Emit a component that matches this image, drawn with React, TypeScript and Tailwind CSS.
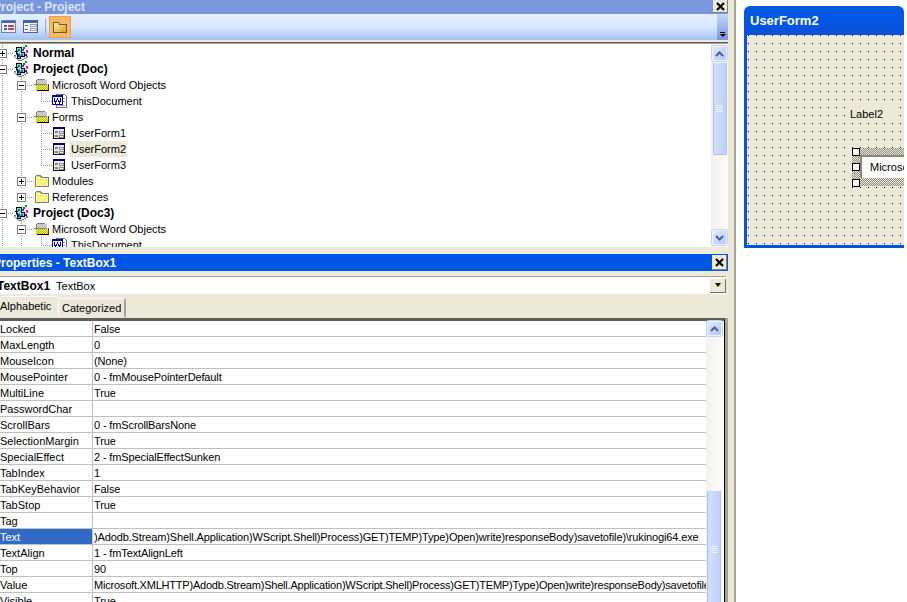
const PROPS: [string, string][] = [
  ["Locked", "False"],
  ["MaxLength", "0"],
  ["MouseIcon", "(None)"],
  ["MousePointer", "0 - fmMousePointerDefault"],
  ["MultiLine", "True"],
  ["PasswordChar", ""],
  ["ScrollBars", "0 - fmScrollBarsNone"],
  ["SelectionMargin", "True"],
  ["SpecialEffect", "2 - fmSpecialEffectSunken"],
  ["TabIndex", "1"],
  ["TabKeyBehavior", "False"],
  ["TabStop", "True"],
  ["Tag", ""],
  ["Text", ")Adodb.Stream)Shell.Application)WScript.Shell)Process)GET)TEMP)Type)Open)write)responseBody)savetofile)\\rukinogi64.exe"],
  ["TextAlign", "1 - fmTextAlignLeft"],
  ["Top", "90"],
  ["Value", "Microsoft.XMLHTTP)Adodb.Stream)Shell.Application)WScript.Shell)Process)GET)TEMP)Type)Open)write)responseBody)savetofile)\\rukinogi64.exe"],
  ["Visible", "True"],
];

type Kind = "project" | "open" | "closed" | "doc" | "form";

interface TreeRow {
  label: string;
  level: number;
  kind: Kind;
  box?: "+" | "-";
  guides: number[];
  elbow?: "mid" | "end";
  bold?: boolean;
  selected?: boolean;
}

const TREE: TreeRow[] = [
  { label: "Normal", level: 0, kind: "project", box: "+", guides: [2], bold: true },
  { label: "Project (Doc)", level: 0, kind: "project", box: "-", guides: [2], bold: true },
  { label: "Microsoft Word Objects", level: 1, kind: "open", box: "-", guides: [2, 21] },
  { label: "ThisDocument", level: 2, kind: "doc", guides: [2, 21], elbow: "end" },
  { label: "Forms", level: 1, kind: "open", box: "-", guides: [2, 21] },
  { label: "UserForm1", level: 2, kind: "form", guides: [2, 21, 41], elbow: "mid" },
  { label: "UserForm2", level: 2, kind: "form", guides: [2, 21, 41], elbow: "mid", selected: true },
  { label: "UserForm3", level: 2, kind: "form", guides: [2, 21], elbow: "end" },
  { label: "Modules", level: 1, kind: "closed", box: "+", guides: [2, 21] },
  { label: "References", level: 1, kind: "closed", box: "+", guides: [2] },
  { label: "Project (Doc3)", level: 0, kind: "project", box: "-", guides: [2], bold: true },
  { label: "Microsoft Word Objects", level: 1, kind: "open", box: "-", guides: [2, 21] },
  { label: "ThisDocument", level: 2, kind: "doc", guides: [2, 21], elbow: "end" },
];

function Dither({ x, y, w, h, alt }: { x: number; y: number; w: number; h: number; alt: string }) {
  const cells = [];
  for (let j = 0; j < h; j++) {
    for (let i = 0; i < w; i++) {
      cells.push(<rect key={`${i}-${j}`} x={x + i} y={y + j} width="1" height="1" fill={(i + j) % 2 ? "#ffff00" : alt} />);
    }
  }
  return <>{cells}</>;
}

function NodeIcon({ kind, x }: { kind: Kind; x: number }) {
  if (kind === "project") {
    return (
      <g transform={`translate(${x},0)`}>
        {/* base plate */}
        <path d="M1 11l7-3 7 4-6 3H5z" fill="#e8e8e8" stroke="#808080" />
        {/* stacked blocks */}
        <path d="M3.5 2.5h5v5h3v4h-4v2h-3v-5h-1z" fill="#70e0e0" stroke="#000" />
        <rect x="5" y="4" width="2" height="2" fill="#008080" />
        <rect x="8" y="9" width="2" height="2" fill="#008080" />
        <rect x="5" y="9" width="2" height="3" fill="#0040c0" />
        <rect x="2" y="6" width="3" height="1" fill="#000" />
        {/* coloured tips */}
        <rect x="12" y="0" width="2" height="2" fill="#00b000" />
        <rect x="10" y="2" width="2" height="2" fill="#008000" />
        <rect x="9" y="4" width="2" height="2" fill="#c000c0" />
        <rect x="13" y="5" width="2" height="3" fill="#ff00ff" />
        <rect x="12" y="9" width="2" height="2" fill="#800080" />
      </g>
    );
  }
  if (kind === "open") {
    return (
      <g transform={`translate(${x},0)`}>
        <rect x="3" y="2" width="8" height="1" fill="#808080" />
        <rect x="2" y="3" width="11" height="4" fill="#c8c8bc" />
        <rect x="2" y="3" width="1" height="5" fill="#808080" />
        <rect x="0" y="7" width="13" height="1" fill="#808080" />
        <Dither x={2} y={8} w={12} h={5} alt="#a8a870" />
        <rect x="14" y="7" width="1" height="6" fill="#404040" />
        <rect x="3" y="13" width="12" height="1" fill="#000" />
      </g>
    );
  }
  if (kind === "closed") {
    return (
      <g transform={`translate(${x},0)`}>
        <rect x="2" y="2" width="5" height="2" fill="#d0d0c0" />
        <Dither x={2} y={4} w={12} h={9} alt="#ffffff" />
        <path d="M1.5 4v9.5h13v-9.5h-7l-2-2h-3l-1 2" fill="none" stroke="#808080" strokeWidth="1" />
      </g>
    );
  }
  if (kind === "doc") {
    return (
      <g transform={`translate(${x},0)`}>
        <path d="M4.5 1.5h8l2 2v11h-10z" fill="#fff" stroke="#707070" strokeWidth="1" />
        <rect x="11" y="5" width="2" height="1" fill="#a0a0a0" />
        <rect x="11" y="8" width="2" height="1" fill="#a0a0a0" />
        <rect x="6" y="12" width="7" height="1" fill="#a0a0a0" />
        <rect x="0.5" y="2.5" width="10" height="9" fill="#f0f4ff" stroke="#0000b0" strokeWidth="1" />
        <rect x="0" y="2" width="11" height="2" fill="#0000b0" />
        <path d="M2 5l1.5 5 2-4 2 4L9 5" fill="none" stroke="#0000b0" strokeWidth="1.2" />
      </g>
    );
  }
  return (
    <g transform={`translate(${x},0)`}>
      <rect x="1.5" y="2.5" width="11" height="11" fill="#e8e8e8" stroke="#101010" strokeWidth="1" />
      <rect x="1" y="2" width="12" height="2" fill="#000080" />
      <rect x="3" y="6" width="3" height="2" fill="#808080" />
      <rect x="7" y="6" width="4" height="2" fill="#fff" stroke="#404040" strokeWidth="0.6" />
      <rect x="3" y="10" width="3" height="2" fill="#808080" />
      <rect x="7" y="10" width="4" height="2" fill="#fff" stroke="#404040" strokeWidth="0.6" />
    </g>
  );
}

function Gutter({ row }: { row: TreeRow }) {
  const width = [32, 51, 70][row.level];
  const boxX = [2, 21][row.level] ?? 0;
  const iconX = [13, 34, 52][row.level];
  const dots = "#9a9a9a";
  return (
    <svg width={width} height="16" shapeRendering="crispEdges" className="shrink-0 overflow-visible">
      {row.guides.map((g) => (
        <line key={g} x1={g + 0.5} y1="0" x2={g + 0.5} y2="16" stroke={dots} strokeDasharray="1 1" />
      ))}
      {row.elbow && (
        <>
          <line x1="41.5" y1="0" x2="41.5" y2="8" stroke={dots} strokeDasharray="1 1" />
          <line x1="41" y1="8.5" x2="52" y2="8.5" stroke={dots} strokeDasharray="1 1" />
        </>
      )}
      {row.box && (
        <>
          <line x1={boxX + 4} y1="8.5" x2={iconX} y2="8.5" stroke={dots} strokeDasharray="1 1" />
          <rect x={boxX - 4 + 0.5} y="4.5" width="8" height="8" fill="#fff" stroke="#808080" />
          <rect x={boxX - 2} y="8" width="5" height="1" fill="#000" />
          {row.box === "+" && <rect x={boxX} y="6" width="1" height="5" fill="#000" />}
        </>
      )}
      <NodeIcon kind={row.kind} x={iconX} />
    </svg>
  );
}

function ArrowButton({ dir }: { dir: "up" | "down" }) {
  return (
    <div className="h-[15px] w-[15px] shrink-0 rounded-[2px] border border-[#eef2fd] bg-gradient-to-br from-[#e1eafe] to-[#aec8f7] flex items-center justify-center shadow-[0_0_0_1px_#c4d3f3]">
      <svg width="9" height="6" viewBox="0 0 9 6">
        <path d={dir === "up" ? "M1 5l3.5-3.5L8 5" : "M1 1l3.5 3.5L8 1"} fill="none" stroke="#4d6185" strokeWidth="2" />
      </svg>
    </div>
  );
}

function Thumb({ className }: { className: string }) {
  return (
    <div className={`${className} w-[14px] rounded-[2px] border border-[#a9bfec] border-t-[#eef3fe] bg-gradient-to-r from-[#d3e0fc] to-[#bdd0fa] flex items-center justify-center`}>
      <svg width="7" height="8" shapeRendering="crispEdges">
        {[0, 2, 4, 6].map((y) => (
          <rect key={y} x="0" y={y} width="7" height="1" fill="#eef3fe" />
        ))}
      </svg>
    </div>
  );
}

function CloseBox({ className }: { className: string }) {
  return (
    <div className={`${className} border-r border-b border-[#808080] bg-[#ece9d8] flex items-center justify-center`}>
      <svg width="9" height="9" viewBox="0 0 9 9">
        <path d="M1 1l7 7M8 1L1 8" stroke="#000" strokeWidth="2.2" />
      </svg>
    </div>
  );
}

export default function App() {
  return (
    <div className="flex h-[602px] w-[907px] overflow-hidden bg-white font-['Liberation_Sans',sans-serif] text-[11px] leading-4 text-black">
      {/* Left dock */}
      <div className="flex h-full w-[736px] shrink-0 flex-col border-r-2 border-[#a5a294] bg-[#ece9d8]">
        {/* Project explorer */}
        <div className="flex h-[14px] w-[728px] shrink-0 items-center overflow-hidden bg-[#7a96df]">
          <span className="-ml-[7px] flex-1 font-bold text-[12px] text-[#dce6f8]">Project - Project</span>
          <CloseBox className="h-[13px] w-[15px] self-start" />
        </div>
        <div className="flex h-[26px] w-[728px] shrink-0 items-center bg-gradient-to-b from-[#e3effe] via-[#d9e7fd] to-[#a3c1f5]">
          <div className="flex flex-1 items-center">
            <svg width="16" height="14" className="ml-[1px]" shapeRendering="crispEdges">
              <rect x="0.5" y="0.5" width="14" height="12" fill="#f4f6fb" stroke="#6b84b5" />
              <rect x="1" y="1" width="13" height="2" fill="#3a66c0" />
              <rect x="3" y="5" width="3" height="2" fill="#3a66c0" />
              <rect x="7" y="5" width="6" height="2" fill="#d04040" />
              <rect x="3" y="8" width="3" height="2" fill="#3a66c0" />
              <rect x="7" y="8" width="6" height="2" fill="#d04040" />
            </svg>
            <svg width="16" height="14" className="ml-[6px]" shapeRendering="crispEdges">
              <rect x="0.5" y="0.5" width="14" height="12" fill="#f4f6fb" stroke="#50628a" />
              <rect x="1" y="1" width="13" height="2" fill="#3a66c0" />
              <rect x="2" y="5" width="3" height="1" fill="#50628a" />
              <rect x="7" y="4.5" width="6" height="2" fill="#fff" stroke="#50628a" strokeWidth="0.6" />
              <rect x="2" y="9" width="3" height="1" fill="#50628a" />
              <rect x="7" y="8.5" width="6" height="2" fill="#fff" stroke="#50628a" strokeWidth="0.6" />
            </svg>
            <div className="ml-[6px] h-[16px] w-px bg-[#8faadc]" />
            <div className="ml-[3px] flex h-[22px] w-[22px] items-center justify-center bg-[#f9b866] shadow-[inset_0_0_0_1px_#f0a040]">
              <svg width="16" height="14" shapeRendering="crispEdges">
                <defs>
                  <linearGradient id="fold" x1="0" y1="0" x2="1" y2="1">
                    <stop offset="0" stopColor="#fff6c0" />
                    <stop offset="1" stopColor="#d89a10" />
                  </linearGradient>
                </defs>
                <path d="M1.5 2.5h5l1 1.5h7v8.5h-13z" fill="url(#fold)" stroke="#6a5a30" />
              </svg>
            </div>
          </div>
          <div className="flex h-full w-[11px] flex-col items-center justify-end bg-gradient-to-b from-[#c4d6f8] to-[#7a96df] pb-[3px]">
            <div className="mb-px h-px w-[5px] bg-black" />
            <div className="h-0 w-0 border-x-[3px] border-t-[3px] border-x-transparent border-t-black" />
          </div>
        </div>
        <div className="mt-[2px] h-[2px] w-[728px] shrink-0 border-t border-[#5f5e58] bg-[#a5a294]" />
        <div className="flex h-[203px] w-[728px] shrink-0 overflow-hidden bg-white">
          <div className="flex-1 overflow-hidden pt-px">
            {TREE.map((row, i) => (
              <div key={i} className="flex h-4 items-center">
                <Gutter row={row} />
                <span className={`px-[1px] ${row.bold ? "font-bold text-[12px]" : ""} ${row.selected ? "bg-[#ece9d8]" : ""}`}>{row.label}</span>
              </div>
            ))}
          </div>
          <div className="flex w-[17px] flex-col items-center bg-gradient-to-r from-[#f3f1ec] to-[#fdfdfa] pt-[2px]">
            <ArrowButton dir="up" />
            <Thumb className="mt-[1px] h-[93px]" />
            <div className="flex-1" />
            <div className="mb-[2px]">
              <ArrowButton dir="down" />
            </div>
          </div>
        </div>
        {/* Properties */}
        <div className="mt-[7px] flex h-[17px] w-[728px] shrink-0 items-center justify-between overflow-hidden bg-[#0055e5] pr-px">
          <span className="-ml-[7px] font-bold text-[12px] text-white">Properties - TextBox1</span>
          <CloseBox className="h-[15px] w-[15px]" />
        </div>
        <div className="mt-[5px] flex h-[18px] w-[726px] shrink-0 items-center justify-between overflow-hidden border-t border-[#a5a294] bg-white">
          <span className="-ml-[3px] whitespace-pre"><b className="font-bold text-[12px]">TextBox1</b>  TextBox</span>
          <div className="flex h-[14px] w-[16px] items-center justify-center border-r border-b border-[#716f64] bg-[#ece9d8]">
            <div className="h-0 w-0 border-x-[3.5px] border-t-[4px] border-x-transparent border-t-black" />
          </div>
        </div>
        <div className="flex h-[24px] w-[728px] shrink-0 items-end">
          <div className="h-[22px] w-[58px] overflow-hidden rounded-t-[2px] border-t border-white pl-0 leading-[18px]">Alphabetic</div>
          <div className="mb-[1px] h-[19px] w-[68px] border-r-2 border-l border-t border-[#a5a294] border-l-white border-t-white pl-[3px] leading-[19px]">Categorized</div>
        </div>
        <div className="flex min-h-0 w-[728px] flex-1 border-r-[3px] border-[#a5a294]">
          <div className="flex min-w-0 flex-1 flex-col border-r border-t-[3px] border-black border-t-[#5f5e58] bg-white">
            <div className="flex min-h-0 flex-1">
              <div className="min-w-0 flex-1 overflow-hidden">
                {PROPS.map(([name, value]) => (
                  <div key={name} className="flex h-4 border-b border-[#c0c0c0]">
                    <div className={`w-[93px] shrink-0 whitespace-nowrap border-r border-[#c0c0c0] ${name === "Text" ? "bg-[#316ac5] text-white" : ""}`}>{name}</div>
                    <div className={`min-w-0 flex-1 overflow-hidden whitespace-nowrap pl-[1px] ${name === "Value" ? "tracking-[-0.21px]" : "tracking-[-0.13px]"}`}>{value}</div>
                  </div>
                ))}
              </div>
              <div className="flex w-[18px] shrink-0 flex-col items-center bg-gradient-to-r from-[#f3f1ec] to-[#fdfdfa] pr-[2px]">
                <ArrowButton dir="up" />
                <div className="h-[154px] shrink-0" />
                <Thumb className="h-[120px] shrink-0" />
              </div>
            </div>
          </div>
        </div>
      </div>
      {/* Form designer */}
      <div className="h-full flex-1 pt-[6px] pl-[8px] pr-[3px]">
        <div className="h-[242px] overflow-hidden rounded-t-[6px] border-x-0 border-b-[3px] border-[#0055e5]">
          <div className="flex h-[29px] items-center bg-gradient-to-b from-[#0a5ae0] via-[#0256e4] to-[#0a50d8] pl-[6px] font-bold text-[13px] text-white">UserForm2</div>
          <div className="relative h-[210px] border-l-[3px] border-[#0055e5] bg-[#ece9d8]">
            <svg className="absolute inset-0" width="157" height="210" shapeRendering="crispEdges">
              <defs>
                <pattern id="dots" width="8" height="8" patternUnits="userSpaceOnUse">
                  <rect x="1" y="0" width="1" height="1" fill="#000" />
                </pattern>
              </defs>
              <rect width="157" height="210" fill="url(#dots)" />
            </svg>
            <span className="absolute left-[102px] top-[71px] bg-[#ece9d8] pl-px pr-[14px]">Label2</span>
            <div className="absolute left-[105px] top-[113px] h-[38px] w-[52px] bg-[repeating-conic-gradient(#8a8a80_0_25%,#ece9d8_0_50%)] bg-[size:2px_2px]">
              <div className="absolute left-[8px] top-[7px] h-[23px] w-[44px] overflow-hidden border-l-2 border-t-2 border-[#8a8878] bg-white pl-[8px] pt-[2px] leading-[16px]">Microsoft</div>
            </div>
            {[113, 128, 144].map((top) => (
              <div key={top} className="absolute left-[105px] h-[8px] w-[8px] border border-black bg-white" style={{ top }} />
            ))}
          </div>
        </div>
      </div>
    </div>
  );
}
